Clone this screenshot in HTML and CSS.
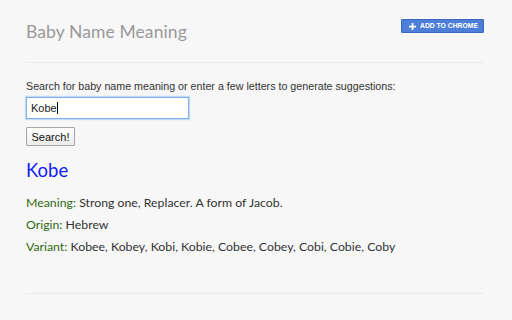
FILE: index.html
```html
<!DOCTYPE html>
<html>
<head>
<meta charset="utf-8">
<link rel="stylesheet" href="styles.css">
</head>
<body>
<div class="page">
  <header class="header">
    <h1 class="title">Baby Name Meaning</h1>
    <a class="add-btn"><svg class="plus" viewBox="0 0 8 8" width="7" height="7"><path d="M3 0h2v3h3v2H5v3H3V5H0V3h3z" fill="#fff"/></svg><span>ADD TO CHROME</span></a>
  </header>
  <section class="search">
    <p class="label">Search for baby name meaning or enter a few letters to generate suggestions:</p>
    <div class="input">Kobe<span class="caret"></span></div>
    <button class="search-btn">Search!</button>
  </section>
  <section class="result">
    <h2 class="name">Kobe</h2>
    <p class="row"><span class="key">Meaning:</span> Strong one, Replacer. A form of Jacob.</p>
    <p class="row"><span class="key">Origin:</span> Hebrew</p>
    <p class="row"><span class="key">Variant:</span> Kobee, Kobey, Kobi, Kobie, Cobee, Cobey, Cobi, Cobie, Coby</p>
  </section>
  <div class="rule"></div>
</div>
</body>
</html>
```
FILE: styles.css
```css
html, body { margin: 0; padding: 0; }
body { background: #f7f7f7; width: 512px; height: 320px; overflow: hidden; }
.page { margin-left: 26px; width: 458px; }
.header {
  display: flex; justify-content: space-between; align-items: flex-start;
  height: 62px; border-bottom: 1px solid #ebebeb;
}
.title {
  margin: 21px 0 0; font-family: "Lato", sans-serif; font-weight: 400;
  font-size: 17.5px; line-height: 22px; color: #999; letter-spacing: 0.1px;
}
.add-btn {
  margin-top: 19px; display: flex; align-items: center; gap: 4px;
  height: 12px; padding: 0 5px 0 7px; background: #4d7fd8; border: 1px solid #3a68c0;
  border-radius: 1px; color: #fff; font-family: "Liberation Sans", sans-serif;
  font-size: 6.8px; font-weight: 700; letter-spacing: 0; line-height: 12px;
}
.plus { display: block; }
.search { padding-top: 15px; }
.label {
  margin: 0; font-family: "Liberation Sans", sans-serif; font-size: 10.7px; line-height: 16px; color: #333;
}
.input {
  margin-top: 3px; width: 154px; height: 16px; padding: 2px 3px;
  background: #fff; border: 1px solid #7fb0ec; box-shadow: 0 0 1px 1px #c4dcf7;
  font-family: "Liberation Sans", sans-serif; font-size: 11px; line-height: 16px; color: #222;
  display: flex; align-items: center; padding-left: 4px;
}
.caret { display: inline-block; width: 1px; height: 12px; background: #000; }
.search-btn {
  display: block; margin-top: 8px; height: 19px; width: 49px; padding: 0;
  font-family: "Liberation Sans", sans-serif; font-size: 11px; color: #111;
  background: linear-gradient(#fdfdfd, #ececec); border: 1px solid #a6a6a6; border-radius: 1px;
}
.result { padding-top: 12px; height: 135px; }
.name {
  margin: 0 0 10px; font-family: "Lato", sans-serif; font-weight: 400; font-size: 18.5px;
  line-height: 24px; color: #0f22f5;
}
.row {
  margin: 0; font-family: "Lato", sans-serif; font-size: 12.3px; line-height: 22px; color: #333;
}
.key { color: #2f6a12; }
.rule { border-top: 1px solid #ebebeb; }
```
